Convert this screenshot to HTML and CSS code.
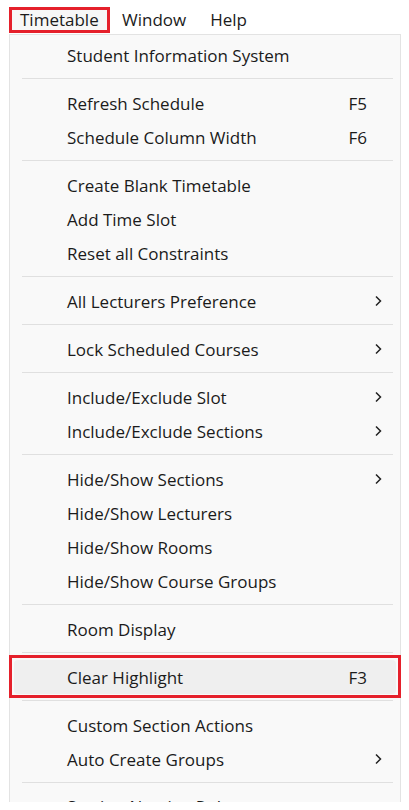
FILE: index.html
```html
<!DOCTYPE html>
<html>
<head>
<meta charset="utf-8">
<link rel="stylesheet" href="styles.css">
</head>
<body>
<div class="menubar">
  <div class="top-item active">Timetable</div>
  <div class="top-item">Window</div>
  <div class="top-item">Help</div>
</div>
<div class="panel">
  <div class="item"><span class="label">Student Information System</span></div>
  <div class="sep"></div>
  <div class="item"><span class="label">Refresh Schedule</span><span class="key">F5</span></div>
  <div class="item"><span class="label">Schedule Column Width</span><span class="key">F6</span></div>
  <div class="sep"></div>
  <div class="item"><span class="label">Create Blank Timetable</span></div>
  <div class="item"><span class="label">Add Time Slot</span></div>
  <div class="item"><span class="label">Reset all Constraints</span></div>
  <div class="sep"></div>
  <div class="item"><span class="label">All Lecturers Preference</span><span class="sub"><svg viewBox="0 0 8 12" width="8" height="12"><path d="M2 1.5 L6.5 6 L2 10.5" fill="none" stroke="#222" stroke-width="1.5"/></svg></span></div>
  <div class="sep"></div>
  <div class="item"><span class="label">Lock Scheduled Courses</span><span class="sub"><svg viewBox="0 0 8 12" width="8" height="12"><path d="M2 1.5 L6.5 6 L2 10.5" fill="none" stroke="#222" stroke-width="1.5"/></svg></span></div>
  <div class="sep"></div>
  <div class="item"><span class="label">Include/Exclude Slot</span><span class="sub"><svg viewBox="0 0 8 12" width="8" height="12"><path d="M2 1.5 L6.5 6 L2 10.5" fill="none" stroke="#222" stroke-width="1.5"/></svg></span></div>
  <div class="item"><span class="label">Include/Exclude Sections</span><span class="sub"><svg viewBox="0 0 8 12" width="8" height="12"><path d="M2 1.5 L6.5 6 L2 10.5" fill="none" stroke="#222" stroke-width="1.5"/></svg></span></div>
  <div class="sep"></div>
  <div class="item"><span class="label">Hide/Show Sections</span><span class="sub"><svg viewBox="0 0 8 12" width="8" height="12"><path d="M2 1.5 L6.5 6 L2 10.5" fill="none" stroke="#222" stroke-width="1.5"/></svg></span></div>
  <div class="item"><span class="label">Hide/Show Lecturers</span></div>
  <div class="item"><span class="label">Hide/Show Rooms</span></div>
  <div class="item"><span class="label">Hide/Show Course Groups</span></div>
  <div class="sep"></div>
  <div class="item"><span class="label">Room Display</span></div>
  <div class="sep"></div>
  <div class="item hover marked"><span class="label">Clear Highlight</span><span class="key">F3</span></div>
  <div class="sep"></div>
  <div class="item"><span class="label">Custom Section Actions</span></div>
  <div class="item"><span class="label">Auto Create Groups</span><span class="sub"><svg viewBox="0 0 8 12" width="8" height="12"><path d="M2 1.5 L6.5 6 L2 10.5" fill="none" stroke="#222" stroke-width="1.5"/></svg></span></div>
  <div class="sep"></div>
  <div class="item cut"><span class="label">Section Naming Rules</span></div>
</div>
</body>
</html>
```
FILE: styles.css
```css
html, body {
  margin: 0;
  padding: 0;
  background: #ffffff;
}
body {
  width: 409px;
  height: 810px;
  overflow: hidden;
  font-family: "Open Sans", "Noto Sans", sans-serif;
  font-size: 17px;
  color: #1b1b1b;
}
.menubar {
  display: flex;
  align-items: flex-start;
  height: 34px;
  padding: 7px 0 0 9px;
  box-sizing: border-box;
}
.top-item {
  padding: 0 12px;
  line-height: 26px;
}
.top-item.active {
  border: 3px solid #e5202b;
  padding: 0 8px;
  line-height: 20px;
  width: 79px;
  background: #f7f7f7;
}
.panel {
  margin-left: 9px;
  width: 392px;
  box-sizing: border-box;
  border: 1px solid #e3e3e3;
  border-bottom: none;
  background: #f9f9f9;
  padding-top: 3px;
}
.item {
  position: relative;
  display: flex;
  align-items: center;
  height: 34px;
  margin: 0 4px;
  padding: 0 10px 0 53px;
  border-radius: 4px;
}
.item.cut {
  height: 12px;
  overflow: hidden;
  align-items: flex-start;
}
.item.cut .label {
  line-height: 34px;
}
.label {
  flex: 1;
  white-space: nowrap;
}
.key {
  margin-right: 19px;
}
.sub {
  width: 16px;
  display: flex;
  justify-content: center;
  align-items: center;
}
.item.hover {
  background: #efefef;
}
.item.marked::after {
  content: "";
  position: absolute;
  left: -5px;
  right: -5px;
  top: -5px;
  bottom: -4px;
  border: 3px solid #e5202b;
}
.sep {
  height: 1px;
  background: #e0e0e0;
  margin: 6px 7px 7px 12px;
}
```
